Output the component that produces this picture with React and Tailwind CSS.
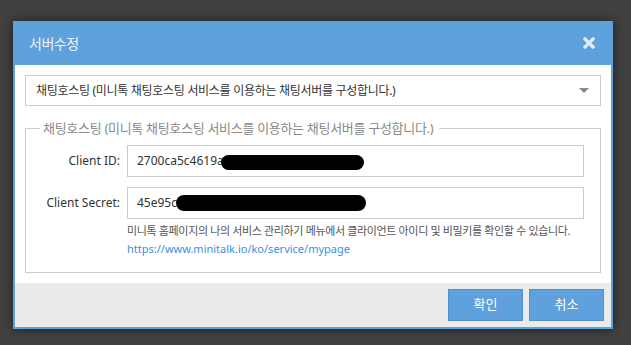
import React from 'react';

const font = { fontFamily: '"Noto Sans", "Noto Sans CJK KR", sans-serif' };

function Field({ label, value, cover }) {
    return (
        <div className="flex items-center">
            <div className="w-[94px] text-right text-[12px] text-[#333]">{label}</div>
            <div className="relative ml-[7px] h-[32px] flex-1 border border-[#cccccc] bg-white pl-[9px] flex items-center text-[12px] text-[#333]">
                {value}
                {/* redaction */}
                <span className={cover} />
            </div>
        </div>
    );
}

export default function App() {
    return (
        <div className="h-[345px] w-full bg-[#414141] pt-[21px] pl-[13px] overflow-hidden" style={font}>
            <div className="w-[600px] bg-[#5fa1dd] px-[2px] pb-[2px] shadow-[0_0_10px_rgba(0,0,0,0.55)]">

                {/* Header */}
                <div className="h-[44px] flex items-center justify-between pl-[14px] pr-[16px]">
                    <span className="text-[14px] tracking-[-0.5px] text-[#eef4fb]">서버수정</span>
                    <svg width="12" height="12" viewBox="0 0 12 12">
                        <path d="M2 2 L10 10 M10 2 L2 10" stroke="#e3edf8" strokeWidth="3.2" strokeLinecap="square" />
                    </svg>
                </div>

                {/* Body */}
                <div className="bg-white px-[10px] pt-[10px] pb-[10px]">
                    <div className="h-[31px] border border-[#cccccc] flex items-center justify-between pl-[10px] pr-[11px]">
                        <span className="text-[12px] tracking-[-0.3px] text-[#333]">채팅호스팅 (미니톡 채팅호스팅 서비스를 이용하는 채팅서버를 구성합니다.)</span>
                        <svg width="10" height="5" viewBox="0 0 10 5">
                            <path d="M0 0 L10 0 L5 5 Z" fill="#888888" />
                        </svg>
                    </div>

                    <fieldset className="mt-[13px] border border-[#cccccc] pr-[16px] pb-[14px]">
                        <legend className="ml-[14px] pl-[3px] pr-[6px] text-[13px] leading-[18px] tracking-[-0.3px] text-[#8a8a8a]">
                            채팅호스팅 (미니톡 채팅호스팅 서비스를 이용하는 채팅서버를 구성합니다.)
                        </legend>
                        <div className="pt-[8px] flex flex-col gap-[10px]">
                            <Field
                                label="Client ID:"
                                value="2700ca5c4619a"
                                cover="absolute left-[93px] top-[9px] h-[15px] w-[143px] rounded-full bg-black"
                            />
                            <Field
                                label="Client Secret:"
                                value="45e95c"
                                cover="absolute left-[48px] top-[7px] h-[16px] w-[190px] rounded-full bg-black"
                            />
                        </div>
                        <div className="ml-[101px] mt-[3px] leading-[18px]">
                            <div className="text-[11px] tracking-[-0.35px] text-[#555]">미니톡 홈페이지의 나의 서비스 관리하기 메뉴에서 클라이언트 아이디 및 비밀키를 확인할 수 있습니다.</div>
                            <div className="text-[11px] text-[#3d8fe0]">https://www.minitalk.io/ko/service/mypage</div>
                        </div>
                    </fieldset>
                </div>

                {/* Footer */}
                <div className="h-[44px] bg-[#ebebeb] flex items-center justify-end gap-[6px] pr-[7px]">
                    <button className="h-[32px] w-[75px] bg-[#5fa1dd] border border-[#5190cf] text-[13px] text-white">확인</button>
                    <button className="h-[32px] w-[75px] bg-[#5fa1dd] border border-[#5190cf] text-[13px] text-white">취소</button>
                </div>
            </div>
        </div>
    );
}
